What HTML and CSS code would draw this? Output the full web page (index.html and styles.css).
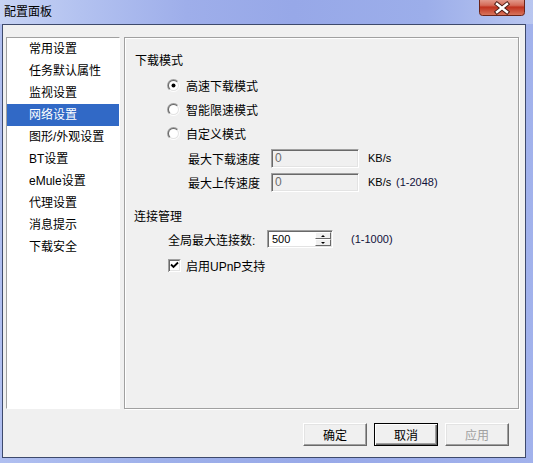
FILE: index.html
```html
<!DOCTYPE html>
<html lang="zh-CN">
<head>
<meta charset="utf-8">
<title>配置面板</title>
<link rel="stylesheet" href="styles.css">
</head>
<body>
<svg class="defs" width="0" height="0" aria-hidden="true">
  <defs>
    <linearGradient id="outerG" x1="0" y1="0" x2="1" y2="1">
      <stop offset="0.45" stop-color="#a0a0a0"/>
      <stop offset="0.55" stop-color="#ffffff"/>
    </linearGradient>
    <linearGradient id="innerG" x1="0" y1="0" x2="1" y2="1">
      <stop offset="0.45" stop-color="#696969"/>
      <stop offset="0.55" stop-color="#e3e3e3"/>
    </linearGradient>
    <linearGradient id="closeG" x1="0" y1="0" x2="0" y2="1">
      <stop offset="0" stop-color="#eab2a6"/>
      <stop offset="0.45" stop-color="#d46a58"/>
      <stop offset="0.55" stop-color="#c0321f"/>
      <stop offset="1" stop-color="#d9785f"/>
    </linearGradient>
  </defs>
</svg>
<div class="window">
  <div class="titlebar">
    <span class="title">配置面板</span>
    <div class="close">
      <svg width="46" height="16" viewBox="0 0 46 16">
        <rect x="0.5" y="-3" width="45" height="18.5" rx="3" fill="url(#closeG)" stroke="#6b2318"/>
        <path d="M18 4 L28 12 M28 4 L18 12" stroke="#4a1a14" stroke-width="4.4" stroke-linecap="square"/>
        <path d="M18 4 L28 12 M28 4 L18 12" stroke="#ffffff" stroke-width="2.4" stroke-linecap="square"/>
      </svg>
    </div>
  </div>
  <div class="frame">
    <div class="client">
      <div class="main">
        <ul class="nav">
          <li>常用设置</li>
          <li>任务默认属性</li>
          <li>监视设置</li>
          <li class="active">网络设置</li>
          <li>图形/外观设置</li>
          <li>BT设置</li>
          <li>eMule设置</li>
          <li>代理设置</li>
          <li>消息提示</li>
          <li>下载安全</li>
        </ul>
        <div class="panel">
          <div class="heading">下载模式</div>
          <div class="radio-row">
            <svg class="radio" width="13" height="13" viewBox="0 0 13 13"><circle cx="6.5" cy="6.5" r="6.5" fill="url(#outerG)"/><circle cx="6.5" cy="6.5" r="5.5" fill="url(#innerG)"/><circle cx="6.5" cy="6.5" r="4.5" fill="#fff"/><circle cx="6.5" cy="6.5" r="2" fill="#000"/></svg>
            <span>高速下载模式</span>
          </div>
          <div class="radio-row">
            <svg class="radio" width="13" height="13" viewBox="0 0 13 13"><circle cx="6.5" cy="6.5" r="6.5" fill="url(#outerG)"/><circle cx="6.5" cy="6.5" r="5.5" fill="url(#innerG)"/><circle cx="6.5" cy="6.5" r="4.5" fill="#fff"/></svg>
            <span>智能限速模式</span>
          </div>
          <div class="radio-row">
            <svg class="radio" width="13" height="13" viewBox="0 0 13 13"><circle cx="6.5" cy="6.5" r="6.5" fill="url(#outerG)"/><circle cx="6.5" cy="6.5" r="5.5" fill="url(#innerG)"/><circle cx="6.5" cy="6.5" r="4.5" fill="#fff"/></svg>
            <span>自定义模式</span>
          </div>
          <div class="speed-row first">
            <span class="speed-label">最大下载速度</span>
            <span class="field disabled">0</span>
            <span class="unit">KB/s</span>
          </div>
          <div class="speed-row">
            <span class="speed-label">最大上传速度</span>
            <span class="field disabled">0</span>
            <span class="unit">KB/s</span>
            <span class="range">(1-2048)</span>
          </div>
          <div class="heading conn">连接管理</div>
          <div class="conn-row">
            <span class="conn-label">全局最大连接数:</span>
            <span class="spin">
              <span class="spin-value">500</span>
              <span class="spin-btns">
                <span class="spin-btn"><span class="tri up"></span></span>
                <span class="spin-btn"><span class="tri down"></span></span>
              </span>
            </span>
            <span class="range wide">(1-1000)</span>
          </div>
          <div class="check-row">
            <svg class="check" width="13" height="13" viewBox="0 0 13 13"><rect x="0" y="0" width="13" height="13" fill="#fff"/><path d="M0 0H13V1H1V13H0Z" fill="#a0a0a0"/><path d="M1 1H12V2H2V12H1Z" fill="#696969"/><path d="M12 1V12H1V13H13V0Z" fill="#ffffff"/><path d="M11 2V11H2V12H12V1Z" fill="#e3e3e3"/><path d="M3 5.5 L5.5 8 L10 3.5" stroke="#000" stroke-width="1.8" fill="none"/></svg>
            <span>启用UPnP支持</span>
          </div>
        </div>
      </div>
      <div class="buttons">
        <button class="btn">确定</button>
        <button class="btn default">取消</button>
        <button class="btn" disabled>应用</button>
      </div>
    </div>
  </div>
</div>
</body>
</html>
```
FILE: styles.css
```css
html, body {
  margin: 0;
  padding: 0;
}
body {
  font-family: "Liberation Sans", "Noto Sans CJK SC", sans-serif;
  font-size: 12px;
  color: #000;
  background: #9aabe8;
}
.defs {
  position: absolute;
  width: 0;
  height: 0;
}
.window {
  width: 533px;
  height: 463px;
  display: flex;
  flex-direction: column;
  background: linear-gradient(to right, #b0bff0 0%, #9eb0ea 30%, #98a9e8 60%, #a2b2ec 100%);
}
.titlebar {
  height: 24px;
  display: flex;
  justify-content: space-between;
  align-items: flex-start;
  background: linear-gradient(to right, #c7d3f4 0%, #b3c2f0 15%, #9eaeea 35%, #97a8e8 55%, #9caeea 80%, #b9c6f0 100%);
}
.title {
  margin: 5px 0 0 4px;
  font-size: 12px;
  line-height: 14px;
  color: #000;
}
.close {
  margin-right: 8px;
  height: 16px;
  display: flex;
}
.frame {
  flex: 1;
  display: flex;
  padding: 0 7px 5px 2px;
}
.client {
  flex: 1;
  display: flex;
  flex-direction: column;
  border: 1px solid #3e4a6c;
  background: #f0f0f0;
  padding: 12px 6px 11px 3px;
}
.main {
  height: 372px;
  display: flex;
  gap: 4px;
}
.nav {
  list-style: none;
  margin: 0;
  padding: 0;
  width: 114px;
  box-sizing: border-box;
  background: #fff;
  border-top: 1px solid #a0a0a0;
  border-left: 1px solid #a0a0a0;
  border-right: 1px solid #fff;
  border-bottom: 1px solid #fff;
}
.nav li {
  height: 22px;
  line-height: 22px;
  padding-left: 22px;
  white-space: nowrap;
}
.nav li.active {
  background: #3169c6;
  color: #fff;
}
.panel {
  flex: 1;
  border: 1px solid #a0a0a0;
  box-shadow: inset 1px 1px 0 #fff, 1px 1px 0 #fff;
  padding: 11px 0 0 10px;
}
.heading {
  height: 24px;
  line-height: 24px;
}
.heading.conn {
  margin-top: 12px;
  height: 22px;
  line-height: 22px;
  margin-left: -1px;
}
.radio-row {
  height: 24px;
  display: flex;
  align-items: center;
  gap: 6px;
  padding-left: 32px;
}
.radio {
  flex: none;
}
.speed-row {
  height: 24px;
  display: flex;
  align-items: center;
  padding-left: 53px;
}
.speed-row.first {
  margin-top: 1px;
}
.speed-label {
  width: 83px;
}
.field {
  box-sizing: border-box;
  width: 88px;
  height: 19px;
  line-height: 17px;
  padding-left: 3px;
  background: #f0f0f0;
  color: #6d6d6d;
  border-top: 1px solid #a0a0a0;
  border-left: 1px solid #a0a0a0;
  border-right: 1px solid #fff;
  border-bottom: 1px solid #fff;
  box-shadow: inset 1px 1px 0 #696969, inset -1px -1px 0 #e3e3e3;
}
.unit {
  width: 28px;
  margin-left: 9px;
  font-size: 11px;
}
.range {
  font-size: 11px;
  color: #10103a;
}
.range.wide {
  margin-left: 18px;
}
.conn-row {
  height: 22px;
  display: flex;
  align-items: center;
  padding-left: 33px;
}
.conn-label {
  width: 99px;
}
.spin {
  box-sizing: border-box;
  width: 66px;
  height: 18px;
  display: flex;
  background: #fff;
  border-top: 1px solid #a0a0a0;
  border-left: 1px solid #a0a0a0;
  border-right: 1px solid #fff;
  border-bottom: 1px solid #fff;
  box-shadow: inset 1px 1px 0 #696969, inset -1px -1px 0 #e3e3e3;
  padding: 1px 1px 1px 1px;
}
.spin-value {
  flex: 1;
  font-size: 11px;
  line-height: 14px;
  padding-left: 3px;
}
.spin-btns {
  width: 16px;
  display: flex;
  flex-direction: column;
}
.spin-btn {
  flex: 1;
  box-sizing: border-box;
  background: #f0f0f0;
  border-top: 1px solid #fff;
  border-left: 1px solid #fff;
  border-right: 1px solid #696969;
  border-bottom: 1px solid #696969;
  display: flex;
  align-items: center;
  justify-content: center;
}
.tri {
  width: 0;
  height: 0;
  border-left: 2px solid transparent;
  border-right: 2px solid transparent;
}
.tri.up {
  border-bottom: 2px solid #000;
}
.tri.down {
  border-top: 2px solid #000;
}
.check-row {
  margin-top: 4px;
  height: 22px;
  display: flex;
  align-items: center;
  gap: 5px;
  padding-left: 33px;
}
.check {
  flex: none;
}
.buttons {
  margin-top: 14px;
  display: flex;
  justify-content: flex-end;
  gap: 7px;
  padding-right: 10px;
}
.btn {
  box-sizing: border-box;
  width: 64px;
  height: 23px;
  margin: 0;
  padding: 0;
  font-family: "Liberation Sans", "Noto Sans CJK SC", sans-serif;
  font-size: 12px;
  color: #000;
  background: #f0f0f0;
  border-top: 1px solid #fff;
  border-left: 1px solid #fff;
  border-right: 1px solid #696969;
  border-bottom: 1px solid #696969;
  box-shadow: inset -1px -1px 0 #a0a0a0, inset 1px 1px 0 #e3e3e3;
}
.btn.default {
  border: 1px solid #000;
  box-shadow: inset 1px 1px 0 #fff, inset -1px -1px 0 #696969, inset -2px -2px 0 #a0a0a0;
}
.btn:disabled {
  color: #a0a0a0;
}
```
